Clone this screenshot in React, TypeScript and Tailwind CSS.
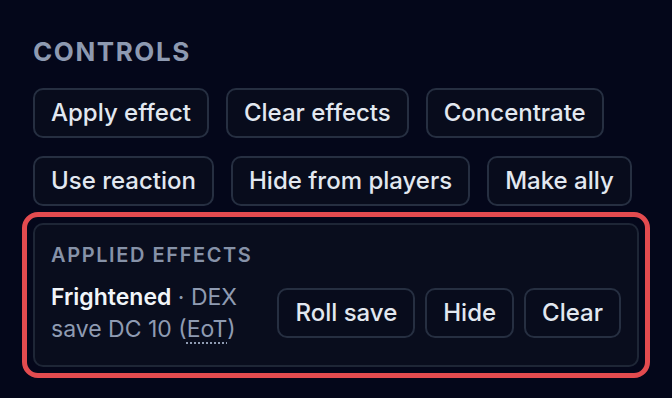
const controls = [
  "Apply effect",
  "Clear effects",
  "Concentrate",
  "Use reaction",
  "Hide from players",
  "Make ally",
];

const Btn = ({ label }: { label: string }) => (
  <button className="flex h-[50px] items-center rounded-[10px] border-2 border-[#262f41] bg-[#080c1c] px-[16px] text-[24px] font-medium leading-none text-[#e2e8f0]">
    {label}
  </button>
);

export default function App() {
  return (
    <div
      className="h-[398px] w-[672px] overflow-hidden bg-[#04071a] px-[33px] pt-[36px]"
      style={{ fontFamily: "Inter, 'Noto Sans', sans-serif" }}
    >
      <h2 className="text-[26px] font-bold uppercase leading-[32px] tracking-[0.06em] text-[#8e9ab1]">
        Controls
      </h2>

      {/* кнопки управления */}
      <div className="mt-[20px] flex flex-wrap gap-x-[17px] gap-y-[18px]">
        {controls.map((c) => (
          <Btn key={c} label={c} />
        ))}
      </div>

      {/* выделенный блок */}
      <div className="-mx-[11px] mt-[6px] rounded-[16px] border-[5px] border-[#e34b4f] p-[6px]">
        <div className="rounded-[10px] border-2 border-[#1e2636] bg-[#090d1d] px-[16px] pb-[20px] pt-[15px]">
          <h3 className="text-[20px] font-semibold uppercase leading-[30px] tracking-[0.08em] text-[#8692a8]">
            Applied effects
          </h3>
          <div className="mt-[11px] flex items-center gap-[16px]">
            <p className="min-w-0 flex-1 text-[23px] leading-[32px] text-[#8f9bb2]">
              <span className="font-semibold text-[#f1f5f9]">Frightened</span> · DEX save DC 10 (
              <abbr
                title="End of turn"
                className="underline decoration-dotted decoration-[2px] underline-offset-[5px]"
              >
                EoT
              </abbr>
              )
            </p>
            <div className="flex gap-[10px]">
              <Btn label="Roll save" />
              <Btn label="Hide" />
              <Btn label="Clear" />
            </div>
          </div>
        </div>
      </div>
    </div>
  );
}
